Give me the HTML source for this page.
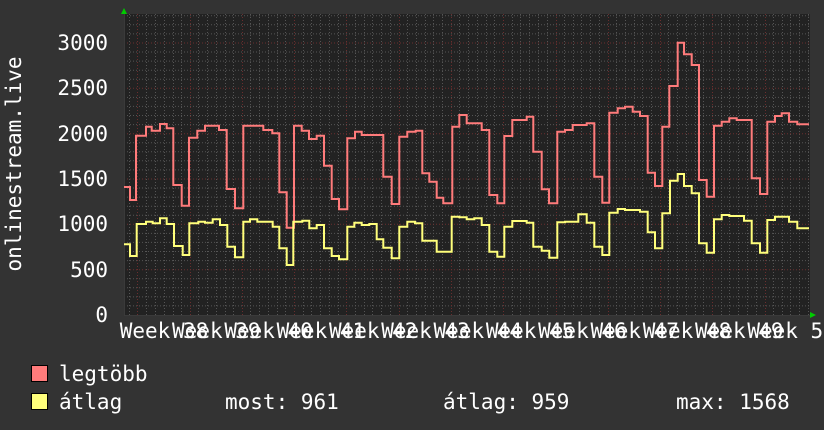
<!DOCTYPE html>
<html><head><meta charset="utf-8"><style>
html,body{margin:0;padding:0;background:#333;}
svg{display:block}
text{font-family:"DejaVu Sans Mono","Liberation Mono",monospace;font-size:21px;fill:#fff}
</style></head><body>
<svg width="824" height="430" viewBox="0 0 824 430" xmlns="http://www.w3.org/2000/svg">
<rect width="824" height="430" fill="#333"/>
<rect x="124" y="14" width="686" height="301" fill="#222"/>
<g stroke="#555" stroke-width="1" stroke-dasharray="1,2">
<path d="M124 305.9H810M124 296.9H810M124 287.8H810M124 278.7H810M124 260.6H810M124 251.5H810M124 242.4H810M124 233.4H810M124 215.2H810M124 206.2H810M124 197.1H810M124 188H810M124 169.9H810M124 160.8H810M124 151.8H810M124 142.7H810M124 124.6H810M124 115.5H810M124 106.4H810M124 97.4H810M124 79.2H810M124 70.2H810M124 61.1H810M124 52H810M124 33.9H810M124 24.8H810M124 15.8H810"/>
<path d="M129.5 14V315M146.5 14V315M155.5 14V315M164.5 14V315M173.5 14V315M181.5 14V315M198.5 14V315M207.5 14V315M216.5 14V315M225.5 14V315M233.5 14V315M250.5 14V315M259.5 14V315M268.5 14V315M277.5 14V315M285.5 14V315M303.5 14V315M311.5 14V315M320.5 14V315M329.5 14V315M338.5 14V315M355.5 14V315M364.5 14V315M372.5 14V315M381.5 14V315M390.5 14V315M407.5 14V315M416.5 14V315M425.5 14V315M433.5 14V315M442.5 14V315M459.5 14V315M468.5 14V315M477.5 14V315M486.5 14V315M494.5 14V315M512.5 14V315M520.5 14V315M529.5 14V315M538.5 14V315M547.5 14V315M564.5 14V315M573.5 14V315M581.5 14V315M590.5 14V315M599.5 14V315M616.5 14V315M625.5 14V315M634.5 14V315M642.5 14V315M651.5 14V315M668.5 14V315M677.5 14V315M686.5 14V315M695.5 14V315M703.5 14V315M721.5 14V315M729.5 14V315M738.5 14V315M747.5 14V315M756.5 14V315M773.5 14V315M782.5 14V315M790.5 14V315M799.5 14V315M808.5 14V315"/>
</g>
<g stroke="#6a2e2e" stroke-width="1" stroke-dasharray="1,2">
<path d="M124 269.7H810M124 224.3H810M124 179H810M124 133.7H810M124 88.3H810M124 43H810"/>
<path d="M137.5 14V315M190.5 14V315M242.5 14V315M294.5 14V315M346.5 14V315M399.5 14V315M451.5 14V315M503.5 14V315M556.5 14V315M608.5 14V315M660.5 14V315M712.5 14V315M765.5 14V315"/>
</g>
<path d="M124 315.5H810M124.5 14V315" stroke="#3a3a3a" stroke-width="1"/>
<polygon points="121,14 127,14 124,8" fill="#0c0"/>
<polygon points="810,312 810,318 816,315" fill="#0c0"/>
<path fill="none" stroke="#ff7b7b" stroke-width="2" d="M124,187H130V200H136V135.7H146V126.7H151.7V130.7H160V124H166.7V128.3H173.3V185H181.7V205.7H189V137.7H197.3V130.7H205V125.7H219V130H226.7V189H235V208.3H243.3V125.7H263.3V130H272.3V133.3H279.3V192.3H286.7V227.7H294V125.7H301.7V130.7H309V139H316.7V135.7H324V165.7H331.7V199H339V209.3H347.3V138.3H355V131.7H361.7V135H383.3V176.7H391.7V204H399.3V136.7H407.3V131.7H415.7V130.7H422.3V173.3H429.3V181.7H436.7V197.7H443.3V203.3H452.3V126.7H459.3V115H466.7V123.3H481.7V130H489.3V195H497.3V203.3H504.3V136H512.3V120H526.7V116.7H533.3V151.7H541.7V189.3H549V203.3H557.3V131.7H565V130H572.7V125H586.7V123.3H594.3V176.7H602.3V202.7H609.3V112.7H617.7V108.3H625V106.7H632.7V111.7H640V116H647.7V172.7H655V186H662.3V126.7H669.3V86H677.7V42.7H684V54.3H691.7V65H699V180H706.7V196.7H714V125.7H721.7V121.7H729.3V118.3H736.7V120H751.7V178.3H760V194H767.3V121.7H775V116H781.7V113.3H789V121.7H797.3V124.3H809"/>
<path fill="none" stroke="#ffff7b" stroke-width="2" d="M124,244.3H130V256H136.7V224H146V221.7H152.7V223.3H160V218.3H166.7V224H174V246H182.7V255H189.3V223.3H198.3V221.7H205V222.7H212.7V219.3H220V225H227.3V246.7H235V257.3H243.3V221.7H250V219.3H257.3V221.7H272.7V226.7H279.3V248.3H286.7V265H293.3V221.7H302.3V220.7H309.3V228.3H316.7V225H324V248.3H331.7V256H339V259.3H347.3V226.7H354.3V222.7H361.7V225H369.3V224H376.7V239.3H383.3V247.7H391.7V258.3H399.3V226.7H407.3V221.7H415V223.3H422.3V240.7H436.7V251.7H451.7V216.7H459.3V217.3H466.7V219.3H474.3V218.3H481.7V225H489.3V251.7H497.3V256.7H504.3V226.7H512.3V221H526.7V222.7H533.3V246.7H541.7V250.7H549.3V257.7H557.3V222.3H565V221.7H578.3V214.3H586.7V222.7H594.3V246.7H602.3V255H609.3V212.7H617.7V209H625V210H640V211.7H647.7V232.3H655V248.3H662.3V213.3H670V180.7H677.7V174H684V186H691.7V193.3H699V243.3H706.7V252.7H714V219.3H721.7V215H729.3V216H744V220.7H751.7V243.3H760V252.7H767.3V220H775V216.7H789V221.7H797.3V228.3H809"/>
<g text-anchor="end">
<text x="108" y="322">0</text>
<text x="108" y="277">500</text>
<text x="108" y="231">1000</text>
<text x="108" y="186">1500</text>
<text x="108" y="141">2000</text>
<text x="108" y="95">2500</text>
<text x="108" y="50">3000</text>
</g>
<text transform="translate(21,164) rotate(-90)" text-anchor="middle">onlinestream.live</text>
<g text-anchor="middle">
<text x="164" y="338">Week 38</text>
<text x="216.3" y="338">Week 39</text>
<text x="268.6" y="338">Week 40</text>
<text x="320.9" y="338">Week 41</text>
<text x="373.2" y="338">Week 42</text>
<text x="425.5" y="338">Week 43</text>
<text x="477.8" y="338">Week 44</text>
<text x="530.1" y="338">Week 45</text>
<text x="582.4" y="338">Week 46</text>
<text x="634.7" y="338">Week 47</text>
<text x="687" y="338">Week 48</text>
<text x="739.3" y="338">Week 49</text>
<text x="791.6" y="338">Week 50</text>
</g>
<rect x="31.5" y="365.5" width="16" height="16" fill="#ff7b7b" stroke="#000"/>
<rect x="31.5" y="393.5" width="16" height="16" fill="#ffff7b" stroke="#000"/>
<text x="59" y="381">legtöbb</text>
<text x="59" y="409">átlag</text>
<text x="225" y="409">most: 961</text>
<text x="443" y="409">átlag: 959</text>
<text x="676" y="409">max: 1568</text>
</svg>
</body></html>
